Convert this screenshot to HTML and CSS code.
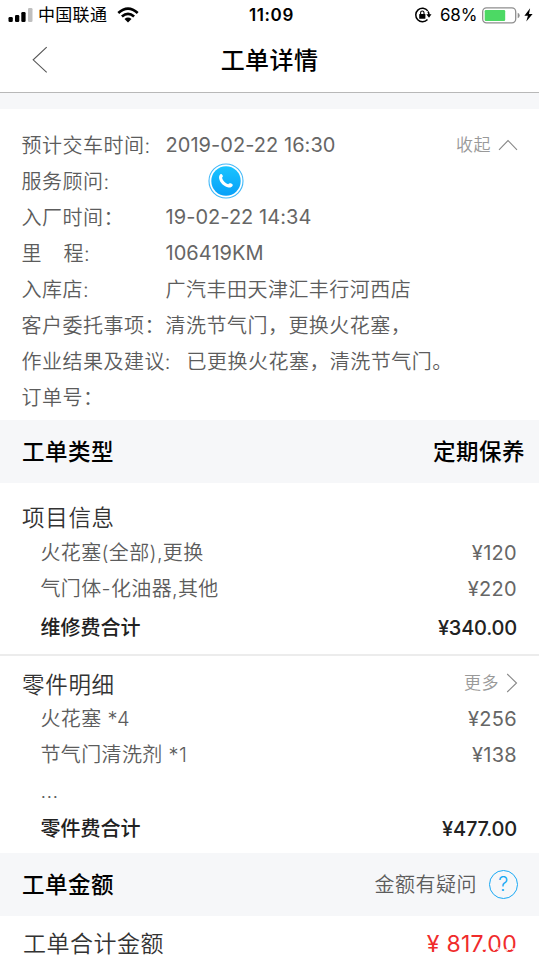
FILE: index.html
```html
<!DOCTYPE html>
<html lang="zh-CN">
<head>
<meta charset="utf-8">
<title>工单详情</title>
<link rel="stylesheet" href="styles.css">
</head>
<body>
<div class="status">
  <svg class="signal" width="26" height="16" viewBox="0 0 26 16"><rect x=".5" y="10" width="4.3" height="5" rx="1.3"/><rect x="7" y="8" width="4.3" height="7" rx="1.3"/><rect x="13.3" y="5" width="4.3" height="10" rx="1.3"/><rect x="20" y="1" width="4.5" height="14" rx="1.3" fill="#bfbfbf"/></svg>
  <span class="carrier">中国联通</span>
  <svg class="wifi" width="22" height="16" viewBox="0 0 22 16" fill="none" stroke="#000" stroke-width="2.7"><path d="M1.3 5.9Q11-2.8 20.7 5.9M4.9 9.5Q11 4.2 17.1 9.5"/><path d="M7.5 11.9Q11 9 14.5 11.9L11 15.4z" fill="#000" stroke="none"/></svg>
  <span class="clock">11:09</span>
  <svg class="lock" width="18" height="16" viewBox="0 0 18 16"><path d="M13.8 3.9A6.7 6.7 0 1 0 13.5 12.4M14 4.5Q15 6 15 8" fill="none" stroke="#000" stroke-width="1.5"/><path d="M12.3 7.3h5.2L15 10.7z"/><rect x="5.2" y="7" width="6.2" height="4.8" rx=".6"/><path d="M6.6 7.4V5.7a1.7 1.7 0 0 1 3.4 0v1.7" fill="none" stroke="#000" stroke-width="1.1"/></svg>
  <span class="percent">68%</span>
  <svg class="battery" width="39" height="17" viewBox="0 0 39 17"><rect x=".7" y=".9" width="33" height="15" rx="3.8" fill="#fff" stroke="#8e8e8e" stroke-width="1.3"/><rect x="2.7" y="3" width="20.5" height="11" rx="1.2" fill="#4cd964"/><path d="M35.7 5.7q2 .6 2 2.8t-2 2.8z" fill="#8e8e8e"/></svg>
  <svg class="bolt" width="9" height="14" viewBox="0 0 9 14"><path d="M6.1.2.4 7.8h3.5L2.3 13.4 8.6 5.9H5z"/></svg>
</div>
<header class="nav">
  <svg class="back" width="16" height="28" viewBox="0 0 16 28"><path d="M14.7 1.2 1.2 13.8 14.7 26.3" fill="none" stroke="#555" stroke-width="1.1"/></svg>
  <h1>工单详情</h1>
</header>
<div class="gap"></div>
<section class="info">
  <div class="field"><span class="label">预计交车时间:</span><span class="num">2019-02-22 16:30</span><span class="fold">收起<svg width="20" height="12" viewBox="0 0 20 12"><path d="M1 10.8 10 1.5l9 9.3"/></svg></span></div>
  <div class="field"><span class="label">服务顾问:</span>
    <svg class="phone" width="36" height="36" viewBox="0 0 36 36"><defs><linearGradient id="blue" x1="0" y1="0" x2="0" y2="1"><stop offset="0" stop-color="#19c4ff"/><stop offset="1" stop-color="#08a0f8"/></linearGradient></defs><circle cx="18" cy="18" r="17" fill="#fff" stroke="#42b9f9" stroke-width="1.1"/><circle cx="18" cy="18" r="14.7" fill="url(#blue)"/><path d="M12.2 11.4c.8-.9 2-.2 2.5 1.1.4 1 0 1.5-.7 2.2.9 3.1 3.2 5.4 6.2 6.5.8-1 1.4-1.3 2.5-.9 1.6.6 2.5 1.4 1.9 2.4-.8 1.4-2.2 2-4 1.7-4.7-.8-8.9-4.9-9.5-9.2-.2-1.6.1-2.8 1.1-3.8z" fill="#fff"/></svg>
  </div>
  <div class="field"><span class="label">入厂时间：</span><span class="num">19-02-22 14:34</span></div>
  <div class="field"><span class="label"><span class="spread">里</span>程:</span><span class="num">106419KM</span></div>
  <div class="field"><span class="label">入库店:</span><span class="value">广汽丰田天津汇丰行河西店</span></div>
  <div class="field"><span class="label">客户委托事项：</span><span class="value">清洗节气门，更换火花塞，</span></div>
  <div class="field"><span class="label long">作业结果及建议:</span><span class="value">已更换火花塞，清洗节气门。</span></div>
  <div class="field"><span class="label">订单号：</span></div>
</section>
<div class="band type"><b>工单类型</b><b>定期保养</b></div>
<section class="group items">
  <div class="head"><span>项目信息</span></div>
  <div class="row"><span>火花塞(全部),更换</span><span class="num">¥120</span></div>
  <div class="row"><span>气门体-化油器,其他</span><span class="num">¥220</span></div>
  <div class="row sum"><span>维修费合计</span><span class="num">¥340.00</span></div>
</section>
<section class="group parts">
  <div class="head"><span>零件明细</span><span class="more">更多<svg width="12" height="20" viewBox="0 0 12 20"><path d="M1.2 1 10.5 10 1.2 19"/></svg></span></div>
  <div class="row"><span>火花塞 *4</span><span class="num">¥256</span></div>
  <div class="row"><span>节气门清洗剂 *1</span><span class="num">¥138</span></div>
  <div class="row dots"><span>...</span></div>
  <div class="row sum"><span>零件费合计</span><span class="num">¥477.00</span></div>
</section>
<div class="band amount"><b>工单金额</b><span class="doubt">金额有疑问<span class="help">?</span></span></div>
<div class="total"><span>工单合计金额</span><span class="price">¥ 817.00<svg class="specks" width="50" height="14" viewBox="0 0 50 14"><path d="M3 5h8M2 9h9M15 4v8M19 3v9M22 6h7M22 10h6M33 5h8M34 9h7" stroke="#fff" stroke-width="1.3" stroke-dasharray="3 1"/></svg></span></div>
</body>
</html>
```

FILE: styles.css
```css
* { box-sizing: border-box; }
body {
  margin: 0;
  width: 539px;
  height: 960px;
  overflow: hidden;
  background: #fff;
  color: #5c5c5c;
  font: 350 20px/36px Inter, "Noto Sans CJK SC", sans-serif;
  letter-spacing: .48px;
  white-space: nowrap;
}
svg { display: block; flex: none; }
.num { color: #666; font-weight: 400; letter-spacing: .05px; }

.status {
  display: grid;
  grid-template-columns: 30px 79px 132px 165px 26px 42px 42px 9px;
  align-items: center;
  height: 30px;
  padding-left: 8px;
  color: #000;
  font-size: 17px;
  line-height: 30px;
  letter-spacing: .3px;
}
.carrier { font-weight: 400; }
.clock { font-weight: 600; letter-spacing: .6px; }
.percent { font-weight: 400; letter-spacing: -.2px; }

.nav {
  display: flex;
  align-items: center;
  justify-content: center;
  position: relative;
  height: 63px;
  border-bottom: 1px solid #b8b8b8;
}
.back { position: absolute; left: 32px; top: 16px; }
h1 {
  margin: 0;
  color: #000;
  font-size: 24px;
  font-weight: 500;
  letter-spacing: .4px;
}
.gap { height: 16px; background: #f6f7f9; }

.info { height: 311px; padding: 18px 22px 5px 21.5px; }
.field { display: flex; align-items: center; height: 36px; }
.label { width: 144px; padding-top: 2px; }
.value { padding-top: 2px; }
.long { width: 165px; }
.spread { margin-right: 21.5px; }
.phone { margin-left: 42px; }
.fold, .more {
  display: flex;
  align-items: center;
  gap: 7px;
  margin-left: auto;
  color: #999;
  font-size: 17px;
}
.fold { margin-right: -1px; }
.more { margin-right: -1px; padding-bottom: 4px; }
.fold svg, .more svg { fill: none; stroke: #888; stroke-width: 1.1; }

.band {
  display: flex;
  align-items: center;
  justify-content: space-between;
  height: 63px;
  padding: 0 22px;
  background: #f6f7f9;
}
.band b { padding-top: 1px; color: #000; font-size: 22.5px; font-weight: 500; }
.type { padding-right: 14px; }

.group { padding: 0 22px; }
.items { height: 173px; padding-top: 17px; border-bottom: 2px solid #ececec; }
.parts { height: 197px; padding-top: 12px; }
.head {
  display: flex;
  align-items: center;
  justify-content: space-between;
  height: 36px;
  color: #333;
  font-size: 22.5px;
  letter-spacing: .7px;
}
.items .head { height: 35px; padding-top: 1px; }
.parts .head { height: 33px; }
.more { letter-spacing: .45px; }
.row {
  display: flex;
  justify-content: space-between;
  height: 36px;
  padding-left: 18.5px;
  letter-spacing: .35px;
}
.row .num { letter-spacing: .3px; }
.sum { padding-top: 2px; height: 38px; color: #222; font-weight: 500; letter-spacing: 0; }
.items .sum { padding-top: 3px; }
.row.sum .num { color: #222; font-weight: 500; letter-spacing: -.2px; }

.doubt { display: flex; align-items: center; gap: 12px; margin-right: -1px; }
.help {
  width: 29px;
  height: 29px;
  border: 1.5px solid #18a8f4;
  border-radius: 50%;
  color: #18a8f4;
  text-align: center;
  line-height: 27px;
}
.total {
  display: flex;
  align-items: center;
  justify-content: space-between;
  height: 56px;
  padding: 0 22px 0 23px;
  color: #333;
  font-size: 23px;
}
.price { position: relative; color: #f02b2b; font-weight: 400; letter-spacing: .3px; }
.specks { position: absolute; right: -12px; bottom: 4px; }
```
